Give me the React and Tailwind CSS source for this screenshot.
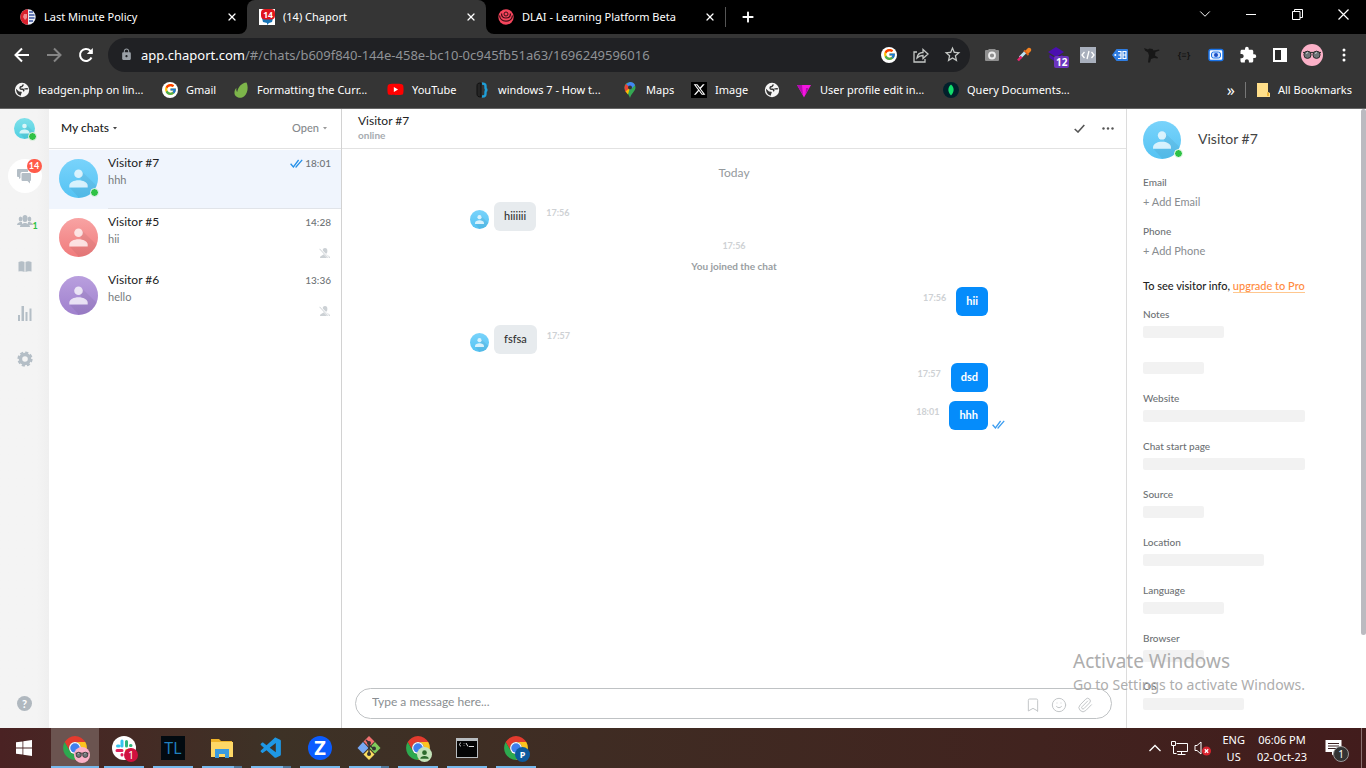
import React from "react";
import { FcGoogle } from "react-icons/fc";
import { FaYoutube } from "react-icons/fa";
import { FaXTwitter } from "react-icons/fa6";
import { MdLock, MdExtension, MdStarBorder } from "react-icons/md";
import { VscVscode } from "react-icons/vsc";
import { Bookmark, Smile, Paperclip, X, ChevronDown, Plus } from "lucide-react";

const CHROME = "font-['Noto_Sans','Open_Sans',sans-serif]";

function ChromeLogo({ className }) {
  return (
    <svg viewBox="0 0 48 48" className={className} aria-hidden="true">
      <path d="M4.95 13A22 22 0 0 1 43.05 13H24A11 11 0 0 0 14.47 29.5Z" fill="#e33b2e" />
      <path d="M43.05 13A22 22 0 0 1 24 46L33.53 29.5A11 11 0 0 0 24 13Z" fill="#fcc31e" />
      <path d="M24 46A22 22 0 0 1 4.95 13L14.47 29.5A11 11 0 0 0 33.53 29.5Z" fill="#2da94f" />
      <circle cx="24" cy="24" r="11" fill="#fff" />
      <circle cx="24" cy="24" r="8.8" fill="#3f7fee" />
    </svg>
  );
}

function Glasses({ className }) {
  return (
    <svg viewBox="0 0 22 22" className={className} aria-hidden="true">
      <circle cx="11" cy="11" r="11" fill="#fbb1c8" />
      <path d="M2 8.500h18" stroke="#333" strokeWidth="1.200" />
      <circle cx="6.500" cy="10.800" r="3.600" fill="#6e7477" stroke="#2b2b2b" />
      <circle cx="15.500" cy="10.800" r="3.600" fill="#6e7477" stroke="#2b2b2b" />
      <path d="M5 9.500l2-1M14 9.500l2-1" stroke="#c9cfd2" />
    </svg>
  );
}

function Globe() {
  return (
    <svg viewBox="0 0 16 16" className="size-4 shrink-0" aria-hidden="true">
      <circle cx="8" cy="8" r="7.200" fill="#f5f5f5" />
      <path d="M9.500 2.600c-1 .4-.6 1.600-1.800 1.800-1.400.2-1.800 1-1.500 2 .3.900 1.600.7 2.600.9 1.300.3 1.200 1.300.4 2" fill="none" stroke="#353535" strokeWidth="1.500" />
      <path d="M2 6.800l3 2.600 2.200.4c.9.300.6 1.300 0 2l-.4 1.900C4 13.200 2 10.500 2 6.800Z" fill="#353535" />
      <path d="M10.500 6.500c1.200.8 2.200.2 3.300.2" stroke="#353535" strokeWidth="1.400" fill="none" />
    </svg>
  );
}

function GoogleBadge() {
  return (
    <span className="flex size-4 shrink-0 items-center justify-center rounded-full bg-white">
      <FcGoogle size={13} />
    </span>
  );
}

const avatarColors = {
  sky: ["#79d3fb", "#55c3f3"],
  red: ["#f8a3a3", "#f07b7c"],
  violet: ["#b99fde", "#9f80cd"],
  aqua: ["#7fe0ea", "#4fd0e2"],
};

function Avatar({ tone, className }) {
  const [top, bottom] = avatarColors[tone];
  return (
    <svg viewBox="0 0 39 39" className={"shrink-0 " + className} aria-hidden="true">
      <defs>
        <linearGradient id={"av-" + tone} x1="0" y1="0" x2="0" y2="1">
          <stop offset="0" stopColor={top} />
          <stop offset="1" stopColor={bottom} />
        </linearGradient>
        <clipPath id={"clip-" + tone}>
          <circle cx="19.500" cy="19.500" r="19.500" />
        </clipPath>
      </defs>
      <circle cx="19.500" cy="19.500" r="19.500" fill={"url(#av-" + tone + ")"} />
      <path d="M22.500 12L40 29V40H21L11 29 28 28 21 19Z" fill="#000" opacity=".05" clipPath={"url(#clip-" + tone + ")"} />
      <circle cx="19.500" cy="14.800" r="4.300" fill="#fff" opacity=".75" />
      <path d="M10.300 28.600v-1.800c0-3.500 4.600-5.600 9.200-5.600s9.200 2.100 9.200 5.600v1.800Z" fill="#fff" opacity=".75" />
    </svg>
  );
}

function DoubleCheck({ className }) {
  return (
    <svg viewBox="0 0 13 9" className={className} fill="none" stroke="currentColor" strokeWidth="1.300" aria-hidden="true">
      <path d="M.6 4.800L3.400 8 8.600 1M5.600 7.600L6 8 12.200.8" />
    </svg>
  );
}

const tabs = [
  {
    title: "Last Minute Policy",
    icon: (
      <svg viewBox="0 0 16 16" className="size-4">
        <circle cx="8" cy="8" r="7.700" fill="#e9eef8" />
        <path d="M8 .3a7.700 7.700 0 0 0 0 15.400Z" fill="#d8202c" />
        <path d="M4 5h3v4l-2 2-2-3Z" fill="#f08a90" />
        <path d="M9 3h4M9 6h5.500M9 9h5.500M9 12h4" stroke="#3c56a0" strokeWidth="1.300" />
      </svg>
    ),
  },
  {
    title: "(14) Chaport",
    active: true,
    icon: (
      <svg viewBox="0 0 16 16" className="size-4">
        <rect width="16" height="16" fill="#fff" />
        <path d="M3 9h11l-1 4-3 1-2 2v-2l-4-1Z" fill="#1673b5" />
        <rect x="2" width="14" height="10.500" rx="4" fill="#e0151c" />
        <text x="9" y="8.500" textAnchor="middle" fontSize="8.500" fontWeight="700" fill="#fff" fontFamily="Open Sans">14</text>
      </svg>
    ),
  },
  {
    title: "DLAI - Learning Platform Beta",
    icon: (
      <svg viewBox="0 0 16 16" className="size-4" fill="none">
        <circle cx="8" cy="8" r="7.700" fill="#f5455c" />
        <circle cx="8" cy="5" r="2" stroke="#3b0c14" />
        <path d="M3.500 4.500c0 6 9 6 9 0M1.500 6.500c1 7.500 12 7.500 13 0" stroke="#3b0c14" strokeWidth="1.200" />
      </svg>
    ),
  },
];

function TabStrip() {
  return (
    <div className="flex h-[34px] shrink-0 bg-black pl-2 text-white">
      {tabs.map((t) => (
        <div
          key={t.title}
          className={
            "relative flex w-[239px] items-center pr-[7px] pl-3 " + (t.active ? "rounded-t-lg bg-[#353535]" : "")
          }
        >
          {t.active && (
            <>
              <svg viewBox="0 0 8 8" className="absolute bottom-0 -left-2 size-2"><path d="M8 0v8H0A8 8 0 0 0 8 0Z" fill="#353535" /></svg>
              <svg viewBox="0 0 8 8" className="absolute -right-2 bottom-0 size-2"><path d="M0 0v8h8A8 8 0 0 1 0 0Z" fill="#353535" /></svg>
            </>
          )}
          {t.icon}
          <a href="#tab" className="ml-2 flex-1 truncate text-[11px] leading-4">{t.title}</a>
          <button aria-label="Close tab" className="flex size-4 items-center justify-center"><X size={12} strokeWidth={2.500} /></button>
        </div>
      ))}
      <div className="my-auto h-5 w-px bg-[#555]" />
      <button aria-label="New tab" className="ml-3 flex w-5 items-center justify-center"><Plus size={16} strokeWidth={2.800} /></button>
      <div className="ml-auto flex h-7">
        <button aria-label="Search tabs" className="flex w-[46px] items-center justify-center"><ChevronDown size={18} strokeWidth={1.300} /></button>
        <button aria-label="Minimize" className="flex w-[46px] items-center justify-center"><svg width="10" height="10"><path d="M0 5.500h10" stroke="#fff" /></svg></button>
        <button aria-label="Restore" className="flex w-[46px] items-center justify-center">
          <svg width="11" height="11" fill="none" stroke="#fff"><path d="M.5 2.500h7.500v8H.5ZM2.500 2.500v-2h8v8H8" /></svg>
        </button>
        <button aria-label="Close" className="flex w-[46px] items-center justify-center">
          <svg width="11" height="11" stroke="#fff" strokeWidth="1.200"><path d="M.5.5l10 10M10.500.5l-10 10" /></svg>
        </button>
      </div>
    </div>
  );
}

const extensions = [
  ["Screenshot", <svg viewBox="0 0 16 16" className="size-4"><path d="M4 3l1-1h6l1 1h2a1 1 0 0 1 1 1v9a1 1 0 0 1-1 1H2a1 1 0 0 1-1-1V4a1 1 0 0 1 1-1Z" fill="#8f8f8f" /><circle cx="8" cy="8.500" r="3" fill="none" stroke="#eee" strokeWidth="1.800" /></svg>],
  ["Color picker", <svg viewBox="0 0 16 16" className="size-4"><path d="M9 4l3-3c2-1 4 1 3 3l-3 3Z" fill="#f58220" /><path d="M8 3.500l4.500 4.500" stroke="#e0651b" strokeWidth="1.800" /><path d="M9 5.500L4 10.500" stroke="#bfe3f5" strokeWidth="3" /><path d="M5.500 9.500L2 13.500" stroke="#e6256d" strokeWidth="2.600" /></svg>],
  ["Layers", <span className="relative"><svg viewBox="0 0 16 16" className="size-4"><path d="M8 0l8 5-8 5-8-5ZM1.500 7.500l6.500 4 6.500-4v3.500L8 15l-6.500-4Z" fill="#4a0fb0" /></svg><span className="absolute top-[9px] left-1.5 rounded-xs bg-[#6b35bd] px-0.5 text-[10px] leading-3 font-bold text-white">12</span></span>],
  ["Code", <svg viewBox="0 0 16 16" className="size-4"><path fill="#a9b0bd" d="M0 0h16v16H0z" /><path d="M4.500 5L2 8l2.500 3M11.500 5L14 8l-2.500 3M9 4l-2 8" stroke="#fff" strokeWidth="1.300" fill="none" /></svg>],
  ["Tag", <svg viewBox="0 0 16 16" className="size-4"><path d="M0 8l4.500-6H15a1 1 0 0 1 1 1v10a1 1 0 0 1-1 1H4.500Z" fill="#2f7de1" /><circle cx="3.300" cy="8" r="1" fill="#fff" /><path d="M6 4.500h3v7H6M11 4.500h3v7h-3ZM6.500 8H9M11 8h3" stroke="#fff" strokeWidth="1.200" fill="none" /></svg>],
  ["Ninja", <svg viewBox="0 0 16 16" className="size-4" fill="#171717"><path d="M0 1l4 1.500 1.500-1 3 .5 1 1.500L15 2.500l.5 1-4 1.500-.5 3.500 3 2-.5 1-3.500-.5-3 1-1 3.500H4l.5-4L5 8.500 4 5.500 1 3.500Z" /></svg>],
  ["JSON", <span className="text-[9px] font-bold text-[#161616]">{"{≡}"}</span>],
  ["Recorder", <svg viewBox="0 0 16 16" className="size-4"><rect x="1" y="2.500" width="14" height="11" rx="2" fill="#fff" stroke="#1a73e8" strokeWidth="1.500" /><rect x="3.500" y="5" width="9" height="6" rx="2" fill="#cfe3ff" stroke="#1a73e8" /><circle cx="8" cy="8" r="2" fill="#1b4fc4" /></svg>],
  ["Extensions", <MdExtension size={18} color="#fff" />],
  ["Side panel", <svg viewBox="0 0 14 14" className="size-3.5"><path d="M0 0h14v14H0z" fill="#fff" /><path d="M2 2h6v10H2z" fill="#2b2b2b" /></svg>],
  ["Profile", <Glasses className="size-[22px]" />],
  ["Menu", <svg width="4" height="14" fill="#fff"><circle cx="2" cy="2" r="1.500" /><circle cx="2" cy="7" r="1.500" /><circle cx="2" cy="12" r="1.500" /></svg>],
];

function Toolbar() {
  return (
    <div className="flex h-[41px] shrink-0 items-center bg-[#353535] px-1.5">
      <button aria-label="Back" className="flex w-8 justify-center"><svg width="16" height="16" fill="none" stroke="#fff" strokeWidth="2"><path d="M15 8H2M8 1.500L1.500 8 8 14.500" /></svg></button>
      <button aria-label="Forward" className="flex w-8 justify-center"><svg width="16" height="16" fill="none" stroke="#858585" strokeWidth="2"><path d="M1 8h13M8 1.500L14.500 8 8 14.500" /></svg></button>
      <button aria-label="Reload" className="flex w-8 justify-center"><svg width="16" height="16" fill="none" stroke="#fff" strokeWidth="2"><path d="M13.500 10.500a6 6 0 1 1-1.200-6.800L14 5.500" /><path d="M14.800 1v6h-6Z" fill="#fff" stroke="none" /></svg></button>
      <div className="mx-1.5 flex h-[34px] flex-1 items-center rounded-full bg-[#202124] pr-2 pl-3 text-white">
        <MdLock size={13} color="#9aa0a6" />
        <p className="ml-2 flex-1 truncate text-[13px] leading-5">
          app.chaport.com<span className="text-[#8f9296]">/#/chats/b609f840-144e-458e-bc10-0c945fb51a63/1696249596016</span>
        </p>
        <GoogleBadge />
        <button aria-label="Share" className="ml-4"><svg width="16" height="16" fill="none" stroke="#c4c7c5" strokeWidth="1.300"><path d="M4 5H1v10h11v-3M4 11c.5-4 3-5.500 6-5.500V2.500L15 7l-5 4.500v-3C8 8.500 6 9 4 11Z" /></svg></button>
        <button aria-label="Bookmark this tab" className="ml-3.5"><MdStarBorder size={19} color="#c4c7c5" /></button>
      </div>
      {extensions.map(([name, icon]) => (
        <button key={name} aria-label={name} className="flex w-8 items-center justify-center">{icon}</button>
      ))}
    </div>
  );
}

const bookmarks = [
  ["leadgen.php on lin...", "w-[148px]", <Globe />],
  ["Gmail", "w-[71px]", <GoogleBadge />],
  ["Formatting the Curr...", "w-[154px]", <svg viewBox="0 0 16 16" className="size-4 shrink-0"><path d="M13.500.5c2 4 1.500 11-2.500 14s-9 .5-9.500-3C1.300 9 2 7 3.500 6c-.5 2 0 3 .7 4C5 5 8.500 1 13.500.5Z" fill="#7db54a" /></svg>],
  ["YouTube", "w-[87px]", <FaYoutube size={17} color="#f00" className="shrink-0 bg-[linear-gradient(#fff,#fff)] bg-[length:6px_6px] bg-center bg-no-repeat" />],
  ["windows 7 - How t...", "w-[148px]", <svg viewBox="0 0 16 16" className="size-4 shrink-0" fill="none"><path d="M7 1C4 1 3 1.500 3 4v8c0 2 1 3 4 3Z" fill="#252525" stroke="#111" /><path d="M8 1.500c4 0 3.500 2 3.500 4 0 1.500 1 2.500 2 2.500-1 0-2 1-2 2.500 0 2 .5 4-3.500 4" stroke="#1f9fd8" strokeWidth="2.400" /></svg>],
  ["Maps", "w-[69px]", <svg viewBox="0 0 16 16" className="size-4 shrink-0"><path d="M8 0a5.500 5.500 0 0 1 5.500 5.500C13.500 9 9.500 11 8 16 6.500 11 2.500 9 2.500 5.500A5.500 5.500 0 0 1 8 0Z" fill="#34a853" /><path d="M8 0a5.500 5.500 0 0 1 5 3.200L8 8 4 2Z" fill="#4285f4" /><path d="M4 2l4 3.500-4 5C3 9 2.500 7.500 2.500 5.500A5 5 0 0 1 4 2Z" fill="#ea4335" /><path d="M3.500 9.500L8 5.500 6 12.500Z" fill="#fbbc04" /><circle cx="8" cy="5.500" r="2" fill="#333" /></svg>],
  ["Image", "w-[73px]", <span className="flex size-4 shrink-0 items-center justify-center bg-black"><FaXTwitter size={13} color="#fff" /></span>],
  ["", "w-[32px]", <Globe />],
  ["User profile edit in...", "w-[147px]", <svg viewBox="0 0 16 16" className="size-4 shrink-0"><path d="M1 3h14L8 15.500Z" fill="#f516e0" /><path d="M1 3h5l1 10ZM10 6h2.500L9.500 13Z" fill="#b30bb0" /></svg>],
  ["Query Documents...", "w-[150px]", <svg viewBox="0 0 16 16" className="size-4 shrink-0"><circle cx="8" cy="8" r="8" fill="#02202b" /><path d="M8 2.500c4 3.500 3 8 0 11-3-3-4-7.500 0-11Z" fill="#12dc6c" /></svg>],
];

function BookmarksBar() {
  return (
    <nav aria-label="Bookmarks" className="flex h-[34px] shrink-0 items-center border-b border-[#666] bg-[#353535] pb-1 pl-3.5 text-[11px] leading-4 text-white">
      {bookmarks.map(([label, width, icon], i) => (
        <a key={i} href="#bookmark" aria-label={label || "Bookmark"} className={"flex shrink-0 items-center gap-2 whitespace-nowrap " + width}>
          {icon}
          {label}
        </a>
      ))}
      <button aria-label="More bookmarks" className="ml-auto text-[16px]">»</button>
      <div className="mx-2.5 h-4 w-px bg-[#777]" />
      <a href="#all" className="flex items-center gap-2 pr-3.5 whitespace-nowrap">
        <svg viewBox="0 0 14 16" className="h-4 w-3.5"><path d="M1 1h11v9l2 1v4H1Z" fill="#ffdf8a" /><path d="M11 10l2 1v3h-2Z" fill="#efb73c" /></svg>
        All Bookmarks
      </a>
    </nav>
  );
}

function NavRail() {
  return (
    <nav aria-label="Main" className="flex w-[49px] shrink-0 flex-col items-center bg-linear-to-r from-[#f4f4f4] from-75% to-[#efefef] text-[#b4bec6]">
      <button aria-label="My profile" className="relative mt-[9px] size-[21px]">
        <Avatar tone="aqua" className="size-[21px]" />
        <span className="absolute -right-0.5 -bottom-0.5 size-[9px] rounded-full border border-[#f4f4f4] bg-[#2fc245]" />
      </button>
      <button aria-label="Chats" className="relative mt-5 flex size-[34px] items-center justify-center rounded-full bg-white">
        <svg width="15" height="15" viewBox="0 0 15 15" fill="currentColor">
          <path d="M1 0h9a1 1 0 0 1 1 1v2H5a1.500 1.500 0 0 0-1.500 1.500V9L2 10V8H1a1 1 0 0 1-1-1V1a1 1 0 0 1 1-1Z" />
          <path d="M5.500 4H13a1 1 0 0 1 1 1v6a1 1 0 0 1-1 1v2.500L10.500 12h-5a1 1 0 0 1-1-1V5a1 1 0 0 1 1-1Z" />
        </svg>
        <span className="absolute top-0 right-0 flex h-3.5 w-[15px] items-center justify-center rounded-full bg-[#ff5b4a] text-[9px] leading-3 font-bold text-white">14</span>
      </button>
      <button aria-label="Visitors" className="relative mt-[5px] flex h-[46px] items-center">
        <svg width="16" height="12" viewBox="0 0 16 12" fill="currentColor">
          <ellipse cx="3.500" cy="4" rx="1.800" ry="2.500" /><ellipse cx="12.500" cy="4" rx="1.800" ry="2.500" />
          <path d="M0 10c0-2 2-2.500 3-3h2v3ZM16 10c0-2-2-2.500-3-3h-2v3Z" />
          <ellipse cx="8" cy="3.500" rx="2.600" ry="3.500" /><path d="M3 12c0-3 3-3.500 4-4h2c1 .5 4 1 4 4Z" />
        </svg>
        <span className="absolute bottom-3 left-4 text-[9px] leading-3 font-bold text-[#2fc245]">1</span>
      </button>
      <button aria-label="Knowledge base" className="flex h-[46px] items-center">
        <svg width="14" height="12" viewBox="0 0 14 12" fill="currentColor"><path d="M.5 1C3-.3 5 0 6.500 1v10C5 10 3 10 .5 10.500ZM7.500 1C9 0 11-.3 13.500 1v9.500C11 10 9 10 7.500 11Z" /></svg>
      </button>
      <button aria-label="Reports" className="flex h-[46px] items-center">
        <svg width="14" height="15" fill="currentColor"><path d="M0 9h2v6H0ZM3.500 0h2.500v15H3.500ZM7.500 6h2v9h-2ZM11.500 2.500h2V15h-2Z" /></svg>
      </button>
      <button aria-label="Settings" className="flex h-[46px] items-center">
        <svg width="16" height="16" viewBox="0 0 16 16" fill="none" stroke="currentColor">
          <circle cx="8" cy="8" r="4.500" strokeWidth="3.400" />
          <circle cx="8" cy="8" r="6.600" strokeWidth="2" strokeDasharray="3.184 2" />
        </svg>
      </button>
      <button aria-label="Help" className="mt-auto mb-[17px] flex size-[15px] items-center justify-center rounded-full bg-[#b0b8bf] text-[11px] leading-4 font-bold text-white">?</button>
    </nav>
  );
}

const chats = [
  { name: "Visitor #7", text: "hhh", time: "18:01", tone: "sky", active: true },
  { name: "Visitor #5", text: "hii", time: "14:28", tone: "red" },
  { name: "Visitor #6", text: "hello", time: "13:36", tone: "violet" },
];

function ChatList() {
  return (
    <section className="flex w-[293px] shrink-0 flex-col border-r border-[#d2d2d2]">
      <header className="mb-px flex h-10 items-center justify-between border-b border-[#e2e2e2] pr-3.5 pb-px pl-3 leading-4">
        <button className="flex items-center gap-1 text-[12px] font-medium text-[#222]">My chats<svg width="4" height="3"><path d="M0 0h4L2 2.500Z" fill="#444" /></svg></button>
        <button className="flex items-center gap-1 text-[11px] font-medium text-[#85898c]">Open<svg width="4" height="3"><path d="M0 0h4L2 2.500Z" fill="#999" /></svg></button>
      </header>
      {chats.map((c) => (
        <a key={c.name} href="#chat" className={"flex pl-2.5 " + (c.active ? "h-[59px] bg-[#f0f5fd]" : "h-[58px]")}>
          <span className="relative mt-[9px] size-[39px] shrink-0">
            <Avatar tone={c.tone} className="size-[39px]" />
            {c.active && <span className="absolute -right-px bottom-px size-[9px] rounded-full border border-[#f0f5fd] bg-[#2fc245]" />}
          </span>
          <span className={"ml-2.5 flex flex-1 justify-between pt-[5px] pr-2.5 " + (c.active ? "border-b border-[#e1e4e9]" : "")}>
            <span className="flex flex-col">
              <span className="text-[12px] leading-4 text-[#222]">{c.name}</span>
              <span className="mt-px text-[11px] leading-4 text-[#777b7e]">{c.text}</span>
            </span>
            <span className="flex flex-col items-end text-[10px] leading-4 font-medium text-[#6f7477]">
              <span className="flex items-center gap-0.5">
                {c.active && <DoubleCheck className="h-[9px] w-[13px] text-[#2590e8]" />}
                {c.time}
              </span>
              {!c.active && (
                <svg width="11" height="10" viewBox="0 0 11 10" className="mt-[18px] mr-px" fill="#ccd1d5">
                  <ellipse cx="6" cy="3" rx="2.400" ry="3" /><path d="M1 10c0-2.500 3-2.500 4-4h2c1 1.500 4 1.500 4 4Z" />
                  <path d="M.5.5l9 9.500" stroke="#fff" strokeWidth="2" /><path d="M.5.8l8.500 9" stroke="#ccd1d5" />
                </svg>
              )}
            </span>
          </span>
        </a>
      ))}
    </section>
  );
}

function Incoming({ text, time }) {
  return (
    <div className="flex h-[29px]">
      <Avatar tone="sky" className="mt-2 size-[19px]" />
      <p className="ml-[5px] rounded-md bg-[#e7ebee] px-2.5 text-[11px] leading-7 font-medium text-[#333]">{text}</p>
      <time className="ml-2.5 pt-[3px] text-[9px] leading-4 font-bold text-[#ced1d4]">{time}</time>
    </div>
  );
}

function Outgoing({ text, time, read }) {
  return (
    <div className="relative flex h-[29px] justify-end pr-2.5">
      <time className="mr-2.5 pt-[3px] text-[9px] leading-4 font-bold text-[#ced1d4]">{time}</time>
      <p className="rounded-md bg-[#058cfb] px-2.5 text-[11px] leading-7 font-bold text-white">{text}</p>
      {read && <DoubleCheck className="absolute -right-[7px] bottom-px h-[9px] w-[13px] text-[#3c9df0]" />}
    </div>
  );
}

function Conversation() {
  return (
    <main className="flex min-w-0 flex-1 flex-col">
      <header className="flex h-10 shrink-0 items-center border-b border-[#e2e2e2] px-4">
        <div className="flex-1 pb-1">
          <h1 className="text-[12px] leading-4 text-[#222]">Visitor #7</h1>
          <p className="text-[10px] leading-3 font-bold text-[#a6abaf]">online</p>
        </div>
        <button aria-label="Close chat"><svg width="11" height="9" fill="none" stroke="#555" strokeWidth="1.600"><path d="M.7 5L4 8 10.300 1" /></svg></button>
        <button aria-label="More" className="-mr-1 ml-[17px]"><svg width="12" height="3" fill="#555"><circle cx="1.500" cy="1.500" r="1.200" /><circle cx="6" cy="1.500" r="1.200" /><circle cx="10.500" cy="1.500" r="1.200" /></svg></button>
      </header>
      <div className="mx-auto flex w-full max-w-[528px] flex-1 flex-col">
        <p className="mt-4 text-center text-[12px] leading-4 text-[#94999d]">Today</p>
        <div className="mt-[21px]"><Incoming text="hiiiiii" time="17:56" /></div>
        <div className="mt-[7px] text-center text-[9px] leading-4 font-bold text-[#ced1d4]">17:56</div>
        <p className="mt-1 mb-[13px] text-center text-[10px] leading-4 font-bold text-[#999ea2]">You joined the chat</p>
        <div className="flex flex-col gap-[9px]">
          <Outgoing text="hii" time="17:56" />
          <Incoming text="fsfsa" time="17:57" />
          <Outgoing text="dsd" time="17:57" />
          <Outgoing text="hhh" time="18:01" read />
        </div>
      </div>
      <form className="mr-3.5 mb-[9px] ml-[13px] flex h-[31px] shrink-0 items-center rounded-full border border-[#bfc2c4] pr-[18px] pl-4 text-[#c3c6c8]">
        <input aria-label="Message" placeholder="Type a message here..." className="flex-1 bg-transparent pb-1 text-[12px] leading-4 outline-none placeholder:text-[#8a8e91]" />
        <span className="flex items-center gap-2.5 pt-0.5">
          <button type="button" aria-label="Saved replies"><Bookmark size={16} strokeWidth={1.500} /></button>
          <button type="button" aria-label="Emoji"><Smile size={16} strokeWidth={1.500} /></button>
          <button type="button" aria-label="Attach file"><Paperclip size={16} strokeWidth={1.500} /></button>
        </span>
      </form>
    </main>
  );
}

const fields = [
  ["Website", "w-[162px]"],
  ["Chat start page", "w-[162px]"],
  ["Source", "w-[61px]"],
  ["Location", "w-[121px]"],
  ["Language", "w-[81px]"],
  ["Browser", "w-[61px]"],
  ["OS", "w-[101px]"],
];

function Details() {
  return (
    <aside className="flex w-[240px] shrink-0 border-l border-[#dcdcdc] text-[10px] leading-4 font-medium text-[#6d7174]">
      <div className="flex-1 pt-3 pl-4">
        <div className="flex items-center">
          <span className="relative size-[38px]">
            <Avatar tone="sky" className="size-[38px]" />
            <span className="absolute -right-0.5 bottom-px size-[9px] rounded-full border border-white bg-[#2fc245]" />
          </span>
          <h2 className="ml-[17px] pb-0.5 text-[14px] leading-5 font-normal text-[#444]">Visitor #7</h2>
        </div>
        <p className="mt-[15px]">Email</p>
        <button className="mt-1 block text-[11px] leading-4 font-normal text-[#888c90]">+ Add Email</button>
        <p className="mt-[13px]">Phone</p>
        <button className="mt-1 block text-[11px] leading-4 font-normal text-[#888c90]">+ Add Phone</button>
        <p className="mt-[19px] text-[11px] leading-4 whitespace-nowrap text-[#222]">
          To see visitor info, <a href="#pro" className="inline-block border-b border-[#ffc78f] leading-3 text-[#ff8a3d]">upgrade to Pro</a>
        </p>
        <p className="mt-3">Notes</p>
        <div className="mt-1 h-3 w-[81px] rounded-xs bg-[#f2f2f2]" />
        <div className="mt-6 h-3 w-[61px] rounded-xs bg-[#f2f2f2]" />
        {fields.map(([label, width]) => (
          <div key={label} className="mt-4">
            <p>{label}</p>
            <div className={"mt-1 h-3 rounded-xs bg-[#f2f2f2] " + width} />
          </div>
        ))}
      </div>
      <div className="h-[526px] w-[5px] rounded-full bg-[#bbbac0]" />
    </aside>
  );
}

const tasks = [
  ["Chrome", <span className="relative"><ChromeLogo className="size-[26px]" /><Glasses className="absolute top-3 left-3 size-4" /></span>],
  ["Slack", (
    <span className="relative">
      <svg viewBox="0 0 24 24" className="size-6" strokeWidth="3" strokeLinecap="round" fill="none">
        <circle cx="12" cy="12" r="12" fill="#fff" />
        <path d="M10 5v5M5.500 10H7" stroke="#36c5f0" /><path d="M14.500 5.500V10M19 9.500h-.5" stroke="#2eb67d" />
        <path d="M5 14.500h5M10 18.500v.5" stroke="#e01e5a" /><path d="M14.500 14.500h4M14.500 18.500v.5" stroke="#ecb22e" />
      </svg>
      <span className="absolute top-3 left-3 flex size-3.5 items-center justify-center rounded-full bg-[#d0103f] text-[10px] leading-3 text-white">1</span>
    </span>
  )],
  ["TL", <span className="flex size-6 items-center justify-center bg-[#020a10] text-[16px] leading-5 text-[#2080bd]">TL</span>],
  ["File Explorer", <svg viewBox="0 0 24 24" className="size-6"><path d="M1 3h8l2 2h11v16H1Z" fill="#f0b429" /><path d="M1 6h22v15H1Z" fill="#ffd866" /><path d="M5 13h14v9h-4v-4H9v4H5Z" fill="#3a9be0" /></svg>, true],
  ["VS Code", <VscVscode size={25} color="#1e97e4" />, true],
  ["Zoom", <span className="flex size-6 items-center justify-center rounded-full bg-[#0b5cff] text-[20px] leading-5 font-bold text-white">Z</span>],
  ["Git", <svg viewBox="0 0 24 24" className="size-6"><path d="M12 0l5.500 5.500L12 11 6.500 5.500Z" fill="#f07070" /><path d="M6 6l5.500 6L6 17.500.5 12Z" fill="#78a8f4" /><path d="M18 6l5.500 6-5.500 5.500L12.500 12Z" fill="#80cc5c" /><path d="M12 13l5.500 5.500L12 24l-5.500-5.500Z" fill="#f9dc60" /><path d="M9 4l3 3v11M12 9l5 4" stroke="#333" strokeWidth="1.500" fill="none" /><circle cx="12" cy="7" r="2" fill="#333" /><circle cx="12" cy="18" r="2" fill="#333" /><circle cx="17" cy="12.500" r="2" fill="#333" /></svg>, true],
  ["Chrome guest", <span className="relative"><ChromeLogo className="size-[26px]" /><svg viewBox="0 0 16 16" className="absolute top-3 left-3 size-[15px]"><circle cx="8" cy="8" r="8" fill="#c4e3b9" /><circle cx="8" cy="6" r="2.500" fill="#2c6b2c" /><path d="M3.500 12.500c0-4 9-4 9 0Z" fill="#2c6b2c" /></svg></span>],
  ["Command Prompt", <svg viewBox="0 0 24 20" className="h-5 w-6"><path d="M1 0h22v20H1Z" fill="#b9bdc0" /><path d="M2 3h20v16H2Z" fill="#050505" /><path d="M6 5c-2 0-2 3 0 3M9 5.500v.5M9 7.500v.5M11 5l2 3.500M14 8.500h5" stroke="#ddd" fill="none" /></svg>],
  ["Chrome P", <span className="relative"><ChromeLogo className="size-[26px]" /><span className="absolute top-3 left-3 flex size-[15px] items-center justify-center rounded-full bg-[#0c5a9e] text-[9px] leading-3 font-bold text-white">P</span></span>],
];

function Taskbar() {
  return (
    <footer className="flex h-10 shrink-0 bg-linear-to-r from-[#4a2223] via-[#3d3226] via-20% to-[#421c1c] text-[11px] leading-4 text-white">
      <button aria-label="Start" className="flex w-12 items-center justify-center">
        <svg width="16" height="16" fill="#fff"><path d="M0 2.300L6.500 1.400V7.600H0ZM7.300 1.300L16 0V7.600H7.300ZM0 8.400H6.500V14.600L0 13.700ZM7.300 8.400H16V16L7.300 14.700Z" /></svg>
      </button>
      <div className="ml-[3px] flex gap-px">
        {tasks.map(([name, icon, stacked], i) => (
          <button key={name} aria-label={name} className={"relative flex w-12 items-center justify-center " + (i === 0 ? "bg-[#6b5450]" : "")}>
            {icon}
            <span className={"absolute bottom-0 h-0.5 bg-[#76b9ed] " + (i === 0 ? "inset-x-0" : "inset-x-1")} />
            {stacked && <span className="absolute right-1 bottom-0 h-0.5 w-2 bg-[#50789a]" />}
          </button>
        ))}
      </div>
      <div className="ml-auto flex items-center">
        <button aria-label="Show hidden icons"><svg width="12" height="8" fill="none" stroke="#fff" strokeWidth="1.300"><path d="M.5 7L6 1.500 11.500 7" /></svg></button>
        <svg width="17" height="14" className="ml-2.5" fill="none" stroke="#fff" aria-label="Network"><path d="M5.500 2.500h11v8H6M10.500 10.500v3M6.500 13.500h8M.5.500h4v4h-4ZM2.500 4.500v8h3" /></svg>
        <svg width="18" height="15" className="ml-1.5" fill="none" stroke="#fff" aria-label="Volume muted"><path d="M1 4.500h2L7 1v12L3 9.500H1Z" /><circle cx="12.500" cy="10" r="4.500" fill="#d9232e" stroke="none" /><path d="M10.800 8.300l3.400 3.400M14.200 8.300l-3.400 3.400" strokeWidth="1.300" /></svg>
        <p className="ml-2.5 text-center text-[11px] leading-[17px]">ENG<br />US</p>
        <p className="ml-3 text-center text-[11px] leading-[17px] whitespace-nowrap">06:06 PM<br />02-Oct-23</p>
        <button aria-label="Notifications" className="relative mr-3 ml-[18px] h-5 w-6">
          <svg width="17" height="16" className="absolute top-0.5 left-0"><path d="M.5 0h16v12H10l-3 3.500V12H.5Z" fill="#fff" /><path d="M3 3.500h11M3 6h11M3 8.500h8" stroke="#3d2222" /></svg>
          <span className="absolute top-2 left-2 flex size-4 items-center justify-center rounded-full border border-[#999] bg-[#333] text-[10px] leading-3">1</span>
        </button>
        <div className="mr-1 h-10 w-px bg-[#8a7070]" />
      </div>
    </footer>
  );
}

export default function App() {
  return (
    <div className={"relative flex h-screen flex-col overflow-hidden bg-white " + CHROME}>
      <TabStrip />
      <Toolbar />
      <BookmarksBar />
      <div className="flex min-h-0 flex-1 overflow-hidden font-['Lato',sans-serif]">
        <NavRail />
        <ChatList />
        <Conversation />
        <Details />
      </div>
      <Taskbar />
      <div className="pointer-events-none absolute right-14 bottom-[73px] w-[237px] whitespace-nowrap text-[#adadad]">
        <p className="text-[19px] leading-7">Activate Windows</p>
        <p className="text-[14px] leading-5">Go to Settings to activate Windows.</p>
      </div>
    </div>
  );
}
